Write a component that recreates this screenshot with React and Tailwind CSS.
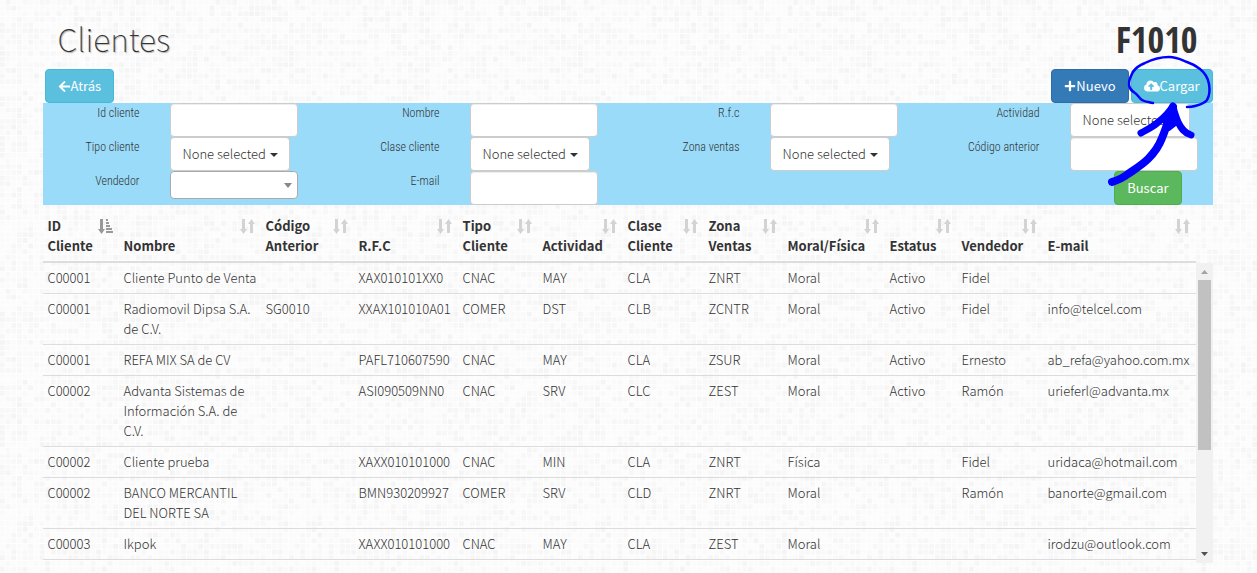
import React from 'react';
import { FaArrowLeft, FaPlus, FaCloudUploadAlt } from 'react-icons/fa';

const columns = [
  { label: 'ID Cliente', width: 'w-[76px]', sorted: true },
  { label: 'Nombre', width: 'w-[142px]' },
  { label: 'Código Anterior', width: 'w-[93px]' },
  { label: 'R.F.C', width: 'w-[104px]' },
  { label: 'Tipo Cliente', width: 'w-[80px]' },
  { label: 'Actividad', width: 'w-[85px]' },
  { label: 'Clase Cliente', width: 'w-[81px]' },
  { label: 'Zona Ventas', width: 'w-[79px]' },
  { label: 'Moral/Física', width: 'w-[102px]' },
  { label: 'Estatus', width: 'w-[72px]' },
  { label: 'Vendedor', width: 'w-[86px]' },
  { label: 'E-mail', width: 'w-[153px]' },
];

const rows = [
  ['C00001', 'Cliente Punto de Venta', '', 'XAX010101XX0', 'CNAC', 'MAY', 'CLA', 'ZNRT', 'Moral', 'Activo', 'Fidel', ''],
  ['C00001', 'Radiomovil Dipsa S.A. de C.V.', 'SG0010', 'XXAX101010A01', 'COMER', 'DST', 'CLB', 'ZCNTR', 'Moral', 'Activo', 'Fidel', 'info@telcel.com'],
  ['C00001', 'REFA MIX SA de CV', '', 'PAFL710607590', 'CNAC', 'MAY', 'CLA', 'ZSUR', 'Moral', 'Activo', 'Ernesto', 'ab_refa@yahoo.com.mx'],
  ['C00002', 'Advanta Sistemas de Información S.A. de C.V.', '', 'ASI090509NN0', 'CNAC', 'SRV', 'CLC', 'ZEST', 'Moral', 'Activo', 'Ramón', 'urieferl@advanta.mx'],
  ['C00002', 'Cliente prueba', '', 'XAXX010101000', 'CNAC', 'MIN', 'CLA', 'ZNRT', 'Física', '', 'Fidel', 'uridaca@hotmail.com'],
  ['C00002', 'BANCO MERCANTIL DEL NORTE SA', '', 'BMN930209927', 'COMER', 'SRV', 'CLD', 'ZNRT', 'Moral', '', 'Ramón', 'banorte@gmail.com'],
  ['C00003', 'Ikpok', '', 'XAXX010101000', 'CNAC', 'MAY', 'CLA', 'ZEST', 'Moral', '', '', 'irodzu@outlook.com'],
];

const filters = [
  { id: 'id', label: 'Id cliente', type: 'text' },
  { id: 'nombre', label: 'Nombre', type: 'text' },
  { id: 'rfc', label: 'R.f.c', type: 'text' },
  { id: 'actividad', label: 'Actividad', type: 'multi' },
  { id: 'tipo', label: 'Tipo cliente', type: 'multi' },
  { id: 'clase', label: 'Clase cliente', type: 'multi' },
  { id: 'zona', label: 'Zona ventas', type: 'multi' },
  { id: 'codigo', label: 'Código anterior', type: 'text' },
  { id: 'vendedor', label: 'Vendedor', type: 'combo' },
  { id: 'email', label: 'E-mail', type: 'text' },
];

// Mosaic tile: 51 x 51 cells, each with a pseudo-random pale grey
const TILE = 51;
const cells = [];
let seed = 7;
for (let i = 0; i < TILE * TILE; i++) {
  seed = (seed * 16807) % 2147483647;
  const r = seed / 2147483647;
  const shade = Math.round(252 - r * r * 8);
  cells.push({ x: i % TILE, y: Math.floor(i / TILE), fill: `rgb(${shade},${shade},${shade})` });
}

const Mosaic = () => (
  <svg className="absolute inset-0 w-full h-full -z-10" aria-hidden="true">
    <defs>
      <pattern id="mosaic" width="289" height="289" patternUnits="userSpaceOnUse" viewBox="0 0 51 51">
        {cells.map((c) => (
          <rect key={`${c.x}-${c.y}`} x={c.x} y={c.y} width="0.84" height="0.84" fill={c.fill} />
        ))}
      </pattern>
    </defs>
    <rect width="100%" height="100%" fill="url(#mosaic)" />
  </svg>
);

const Caret = ({ className }) => (
  <svg className={className} viewBox="0 0 8 4" fill="currentColor" preserveAspectRatio="none" aria-hidden="true">
    <path d="M0 0h8L4 4z" />
  </svg>
);

const SortIcon = ({ sorted }) => (
  <svg
    className={`absolute top-2 right-[6px] w-[15px] h-[15px] ${sorted ? 'text-[#999999]' : 'text-[#d3d3d3]'}`}
    viewBox="0 0 15 15"
    fill="currentColor"
    aria-hidden="true"
  >
    <path d="M2 0h3v10h2L3.500 15 0 10h2z" />
    {sorted ? (
      <path d="M8 0h2v2H8zM8 3h3v2H8zM8 6h4v2H8zM8 9h6v2H8zM8 12h7v2H8z" />
    ) : (
      <path d="M10 14h3V5h2L11.500 0 8 5h2z" />
    )}
  </svg>
);

const Filter = ({ id, label, type }) => (
  <div className="flex h-[34px]">
    <label
      htmlFor={id}
      className="flex-1 mr-[30px] text-right text-xs leading-5 font-light font-['Roboto_Condensed'] whitespace-nowrap"
    >
      {label}
    </label>
    <div className="relative w-32">
      {type === 'text' && (
        <input
          id={id}
          type="text"
          className="block w-full h-[34px] px-3 bg-white border border-[#cccccc] rounded shadow-[inset_0_1px_1px_rgba(0,0,0,0.075)]"
        />
      )}
      {type === 'multi' && (
        <div className="relative w-[120px]">
          <select id={id} className="block appearance-none w-full h-[34px] pl-3 bg-white border border-[#cccccc] rounded">
            <option>None selected</option>
          </select>
          <Caret className="absolute right-3 top-4 w-2 h-1 pointer-events-none" />
        </div>
      )}
      {type === 'combo' && (
        <>
          <select id={id} className="block appearance-none w-full h-7 pl-2 bg-white border border-[#aaaaaa] rounded">
            <option></option>
          </select>
          <Caret className="absolute right-[6px] top-3 w-2 h-[5px] text-[#888888] pointer-events-none" />
        </>
      )}
    </div>
  </div>
);

const Columns = () => (
  <colgroup>
    {columns.map((col) => (
      <col key={col.label} className={col.width} />
    ))}
  </colgroup>
);

// Hand-drawn hint around the upload button
const UploadHint = () => (
  <svg
    className="absolute right-0 -top-4 w-[112px] h-[136px] z-10 pointer-events-none"
    viewBox="1101 53 112 136"
    fill="none"
    stroke="#0000ff"
    strokeLinecap="round"
    strokeLinejoin="round"
    aria-hidden="true"
  >
    <path
      strokeWidth="2.500"
      d="M1153 103c-4-1-8-1-11-3-3-2-4-5-7-7-3-2-6-4-6-9 0-5 2-8 4-12 3-5 7-7 12-9 8-4 15-6 24-6 8 0 13 3 18 5 6 2 9 4 13 7 5 4 8 9 9 15 1 6 1 11-2 16-3 4-8 5-12 6-3 1-6 1-8 1"
    />
    <path
      strokeWidth="8"
      d="M1112 182c6-2 11-4 16-8 7-5 14-9 20-15 7-7 11-13 14-21 3-7 5-14 8-21l3-10"
    />
    <path strokeWidth="7" d="M1141 133c5-3 10-5 15-9 5-4 12-9 17-18 1 6 3 11 5 16 3 6 6 11 13 13" />
    <path strokeWidth="4" fill="#0000ff" d="M1173 106l-13 14 7 2 2 7 9-7z" />
  </svg>
);

const App = () => {
  return (
    <div className="relative isolate min-h-screen pl-4 pr-[18px] pb-[10px] bg-[#fefefe] text-[#333333] text-[13px] leading-5 font-light font-['Noto_Sans_CJK_SC',sans-serif]">
      <Mosaic />
      <div className="max-w-[1170px] mx-auto">
        <header className="flex justify-between items-start h-[69px] px-[15px] pt-5">
          <h1 className="text-[32px] leading-9 font-thin [text-shadow:1px_1px_1px_rgba(0,0,0,0.3)]">Clientes</h1>
          <span className="text-4xl font-bold font-['Open_Sans_Condensed']">F1010</span>
        </header>

        <div className="relative flex items-center gap-[2px] h-[34px] pl-[2px] text-white font-normal">
          <button className="flex items-center h-[34px] px-3 mr-auto bg-[#5bc0de] border border-[#46b8da] rounded">
            <FaArrowLeft className="w-[13px] h-[13px]" />
            Atrás
          </button>
          <button className="flex items-center h-[34px] px-3 bg-[#337ab7] border border-[#2e6da4] rounded">
            <FaPlus className="w-3 h-3" />
            Nuevo
          </button>
          <button className="flex items-center h-[34px] px-3 bg-[#5bc0de] border border-[#46b8da] rounded">
            <FaCloudUploadAlt className="w-4 h-4" />
            Cargar
          </button>
          <UploadHint />
        </div>

        <form className="grid grid-cols-4 gap-x-[45px] pr-[15px] bg-[#99dbf9]">
          {filters.map((filter) => (
            <Filter key={filter.id} {...filter} />
          ))}
          <div className="col-start-4 flex justify-end pr-4">
            <button type="button" className="h-[34px] px-3 bg-[#5cb85c] border border-[#4cae4c] rounded text-white font-normal">
              Buscar
            </button>
          </div>
        </form>

        {/* Column headings stay put while the body scrolls */}
        <div className="pt-[6px] pr-[17px]">
          <table className="w-full table-fixed border-collapse">
            <Columns />
            <thead>
              <tr className="border-b-2 border-[#dddddd]">
                {columns.map((col) => (
                  <th key={col.label} className="relative h-[51px] p-[5px] text-left align-bottom font-bold">
                    <span className="block max-w-14">{col.label}</span>
                    <SortIcon sorted={col.sorted} />
                  </th>
                ))}
              </tr>
            </thead>
          </table>
        </div>

        <div className="flex h-[300px]">
          <div className="flex-1 overflow-y-auto [scrollbar-width:none]">
            <table className="w-full table-fixed border-collapse">
              <Columns />
              <tbody>
                {rows.map((row, i) => (
                  <tr key={i} className="border-b border-[#dddddd]">
                    {row.map((cell, j) => (
                      <td key={j} className="py-[5px] pl-[5px] pr-[3px] align-top">{cell}</td>
                    ))}
                  </tr>
                ))}
              </tbody>
            </table>
          </div>
          <div className="flex flex-col items-center w-[17px] bg-[#f1f1f1]" aria-hidden="true">
            <Caret className="w-[7px] h-1 mt-[7px] mb-[6px] rotate-180 text-[#a3a3a3] shrink-0" />
            <div className="w-[13px] h-[170px] bg-[#c1c1c1]" />
            <Caret className="w-[7px] h-1 mt-auto mb-[7px] text-[#505050] shrink-0" />
          </div>
        </div>
      </div>
    </div>
  );
};

export default App;
